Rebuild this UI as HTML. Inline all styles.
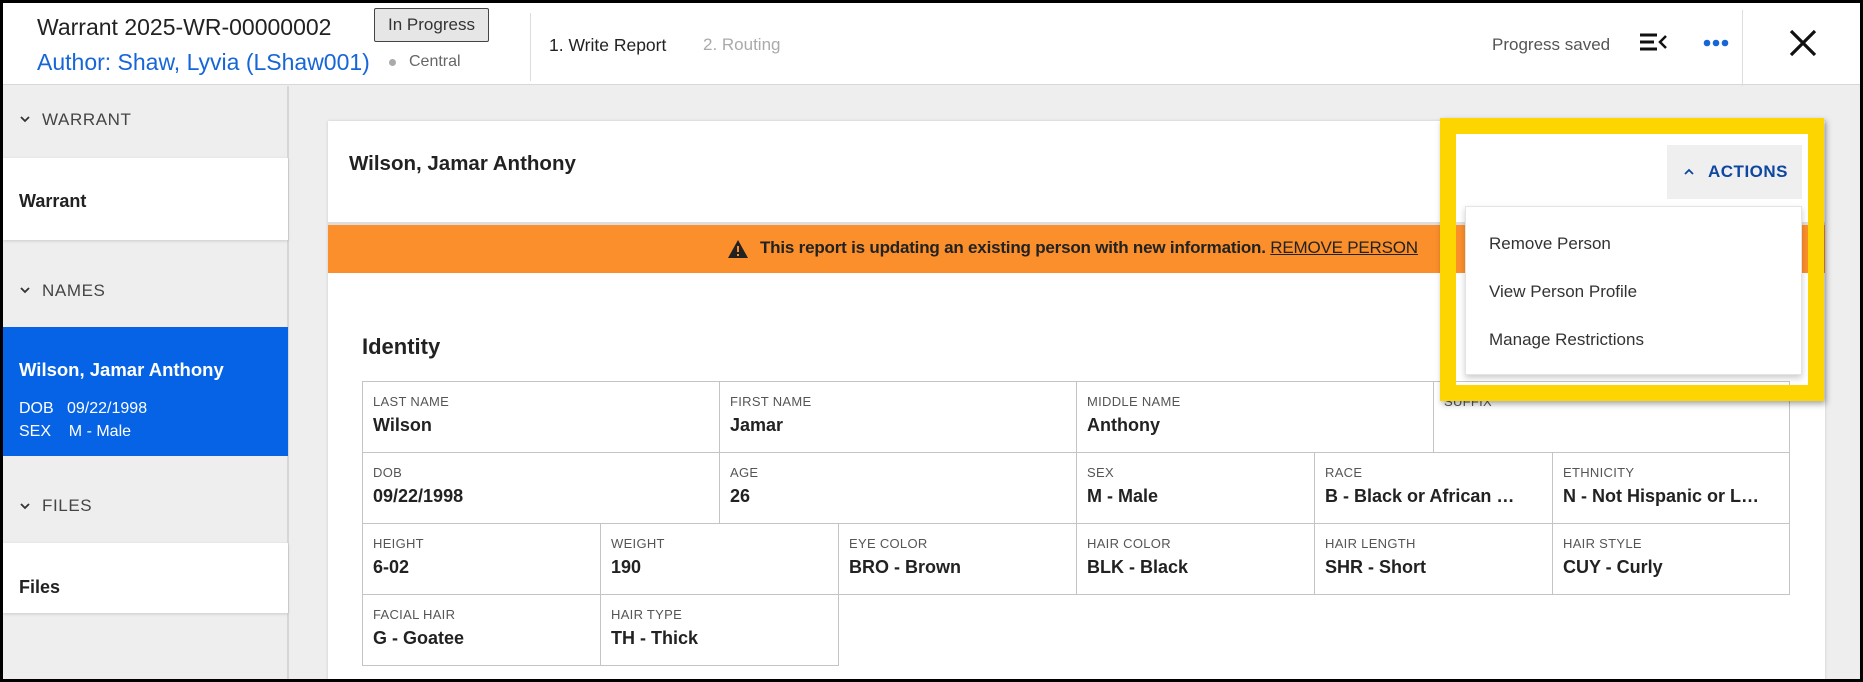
<!DOCTYPE html>
<html><head><meta charset="utf-8"><style>
*{box-sizing:border-box;margin:0;padding:0}
body{width:1863px;height:682px;overflow:hidden;font-family:"Liberation Sans",Arial,sans-serif;background:#000;position:relative;color:#212121}
.a{position:absolute;white-space:nowrap}
#frame{position:absolute;left:3px;top:3px;width:1857px;height:676px;background:#eeeeee;overflow:hidden}
.lbl{font-size:13px;color:#555;letter-spacing:.3px}
.val{font-size:18px;font-weight:bold;color:#222}
.cell{position:absolute;border:1px solid #c4c4c4;background:#fff;padding:0 10px}
.cell .lbl{position:absolute;left:10px;top:12px}
.cell .val{position:absolute;left:10px;top:33px}
</style></head><body>
<div id="frame">
<!-- header -->
<div class="a" style="left:0;top:0;width:1857px;height:82px;background:#fff;border-bottom:1px solid #d8d8d8"></div>
<div class="a" style="left:34px;top:11px;font-size:23px;color:#222">Warrant 2025-WR-00000002</div>
<div class="a" style="left:371px;top:5px;width:115px;height:34px;background:#e6e6e6;border:1px solid #444;border-radius:2px;font-size:17px;line-height:32px;text-align:center;color:#333">In Progress</div>
<div class="a" style="left:34px;top:46px;font-size:23px;color:#1666d8">Author: Shaw, Lyvia (LShaw001)</div>
<div class="a" style="left:386px;top:56px;width:7px;height:7px;border-radius:50%;background:#aaa"></div>
<div class="a" style="left:406px;top:50px;font-size:16px;color:#666">Central</div>
<div class="a" style="left:527px;top:10px;width:1px;height:68px;background:#ddd"></div>
<div class="a" style="left:546px;top:32px;font-size:17.5px;color:#222">1. Write Report</div>
<div class="a" style="left:700px;top:32px;font-size:17px;color:#aaa">2. Routing</div>
<div class="a" style="left:1489px;top:32px;font-size:17px;color:#555">Progress saved</div>
<svg class="a" style="left:1636px;top:29px" width="30" height="20" viewBox="0 0 30 20"><path d="M1 3h17M1 10h14M1 17h17" stroke="#111" stroke-width="3"/><path d="M27 4l-6 6 6 6" stroke="#111" stroke-width="2.5" fill="none"/></svg>
<svg class="a" style="left:1700px;top:36px" width="26" height="8"><circle cx="4" cy="4" r="3.3" fill="#1666d8"/><circle cx="13" cy="4" r="3.3" fill="#1666d8"/><circle cx="22" cy="4" r="3.3" fill="#1666d8"/></svg>
<div class="a" style="left:1739px;top:7px;width:1px;height:76px;background:#ddd"></div>
<svg class="a" style="left:1785px;top:25px" width="30" height="30"><path d="M3 3L27 27M27 3L3 27" stroke="#111" stroke-width="3.2"/></svg>

<!-- sidebar -->
<div class="a" style="left:0;top:83px;width:286px;height:600px;background:#eeeeee;border-right:2px solid #d6d6d6"></div>
<svg class="a" style="left:16px;top:112px" width="12" height="8"><path d="M2 2l4 4 4-4" stroke="#333" stroke-width="1.8" fill="none"/></svg>
<div class="a" style="left:39px;top:107px;font-size:17px;color:#444;letter-spacing:.6px">WARRANT</div>
<div class="a" style="left:0;top:155px;width:285px;height:82px;background:#fff;box-shadow:0 1px 3px rgba(0,0,0,.15)"></div>
<div class="a" style="left:16px;top:188px;font-size:18px;font-weight:bold;color:#222">Warrant</div>
<svg class="a" style="left:16px;top:283px" width="12" height="8"><path d="M2 2l4 4 4-4" stroke="#333" stroke-width="1.8" fill="none"/></svg>
<div class="a" style="left:39px;top:278px;font-size:17px;color:#444;letter-spacing:.6px">NAMES</div>
<div class="a" style="left:0;top:324px;width:285px;height:129px;background:#0763e5"></div>
<div class="a" style="left:16px;top:356px;font-size:18.5px;font-weight:bold;color:#fff">Wilson, Jamar Anthony</div>
<div class="a" style="left:16px;top:397px;font-size:16px;color:#fff">DOB&nbsp;&nbsp; 09/22/1998</div>
<div class="a" style="left:16px;top:420px;font-size:16px;color:#fff">SEX&nbsp;&nbsp;&nbsp; M - Male</div>
<svg class="a" style="left:16px;top:499px" width="12" height="8"><path d="M2 2l4 4 4-4" stroke="#333" stroke-width="1.8" fill="none"/></svg>
<div class="a" style="left:39px;top:493px;font-size:17px;color:#444;letter-spacing:.6px">FILES</div>
<div class="a" style="left:0;top:540px;width:285px;height:70px;background:#fff;box-shadow:0 1px 3px rgba(0,0,0,.15)"></div>
<div class="a" style="left:16px;top:574px;font-size:18px;font-weight:bold;color:#222">Files</div>

<!-- card -->
<div class="a" style="left:325px;top:118px;width:1497px;height:570px;background:#fff;box-shadow:0 0 3px rgba(0,0,0,.15)"></div>
<div class="a" style="left:346px;top:149px;font-size:20.5px;font-weight:bold;color:#222">Wilson, Jamar Anthony</div>
<div class="a" style="left:325px;top:219px;width:1497px;height:3px;background:#ddd"></div>
<div class="a" style="left:325px;top:222px;width:1497px;height:48px;background:#fb8f2b"></div>
<svg class="a" style="left:724px;top:236px" width="22" height="20"><path d="M11 1L21 19H1Z" fill="#222"/><path d="M11 7v6M11 15v2" stroke="#fb8f2b" stroke-width="2"/></svg>
<div class="a" style="left:757px;top:235px;font-size:17px;font-weight:bold;color:#222;letter-spacing:-.2px">This report is updating an existing person with new information. <span style="font-weight:normal;text-decoration:underline">REMOVE PERSON</span></div>
<div class="a" style="left:359px;top:331px;font-size:22px;font-weight:bold;color:#222">Identity</div>

<!-- table -->
<div class="cell" style="left:359px;top:378px;width:358px;height:72px"><div class="lbl">LAST NAME</div><div class="val">Wilson</div></div>
<div class="cell" style="left:716px;top:378px;width:358px;height:72px"><div class="lbl">FIRST NAME</div><div class="val">Jamar</div></div>
<div class="cell" style="left:1073px;top:378px;width:358px;height:72px"><div class="lbl">MIDDLE NAME</div><div class="val">Anthony</div></div>
<div class="cell" style="left:1430px;top:378px;width:357px;height:72px"><div class="lbl">SUFFIX</div></div>
<div class="cell" style="left:359px;top:449px;width:358px;height:72px"><div class="lbl">DOB</div><div class="val">09/22/1998</div></div>
<div class="cell" style="left:716px;top:449px;width:358px;height:72px"><div class="lbl">AGE</div><div class="val">26</div></div>
<div class="cell" style="left:1073px;top:449px;width:239px;height:72px"><div class="lbl">SEX</div><div class="val">M - Male</div></div>
<div class="cell" style="left:1311px;top:449px;width:239px;height:72px"><div class="lbl">RACE</div><div class="val">B - Black or African …</div></div>
<div class="cell" style="left:1549px;top:449px;width:238px;height:72px"><div class="lbl">ETHNICITY</div><div class="val">N - Not Hispanic or L…</div></div>
<div class="cell" style="left:359px;top:520px;width:239px;height:72px"><div class="lbl">HEIGHT</div><div class="val">6-02</div></div>
<div class="cell" style="left:597px;top:520px;width:239px;height:72px"><div class="lbl">WEIGHT</div><div class="val">190</div></div>
<div class="cell" style="left:835px;top:520px;width:239px;height:72px"><div class="lbl">EYE COLOR</div><div class="val">BRO - Brown</div></div>
<div class="cell" style="left:1073px;top:520px;width:239px;height:72px"><div class="lbl">HAIR COLOR</div><div class="val">BLK - Black</div></div>
<div class="cell" style="left:1311px;top:520px;width:239px;height:72px"><div class="lbl">HAIR LENGTH</div><div class="val">SHR - Short</div></div>
<div class="cell" style="left:1549px;top:520px;width:238px;height:72px"><div class="lbl">HAIR STYLE</div><div class="val">CUY - Curly</div></div>
<div class="cell" style="left:359px;top:591px;width:239px;height:72px"><div class="lbl">FACIAL HAIR</div><div class="val">G - Goatee</div></div>
<div class="cell" style="left:597px;top:591px;width:239px;height:72px"><div class="lbl">HAIR TYPE</div><div class="val">TH - Thick</div></div>

<!-- actions overlay -->
<div class="a" style="left:1438px;top:130px;width:362px;height:78px;background:#fff"></div>
<div class="a" style="left:1664px;top:142px;width:135px;height:54px;background:#efefef"></div>
<svg class="a" style="left:1680px;top:165px" width="12" height="8"><path d="M2 6l4-4 4 4" stroke="#0d47a1" stroke-width="1.8" fill="none"/></svg>
<div class="a" style="left:1705px;top:159px;font-size:17px;font-weight:bold;color:#0d47a1;letter-spacing:.5px">ACTIONS</div>
<div class="a" style="left:1462px;top:203px;width:337px;height:169px;background:#fff;border:1px solid #e4e4e4;box-shadow:0 3px 6px rgba(0,0,0,.2)"></div>
<div class="a" style="left:1486px;top:231px;font-size:17px;color:#333">Remove Person</div>
<div class="a" style="left:1486px;top:279px;font-size:17px;color:#333">View Person Profile</div>
<div class="a" style="left:1486px;top:327px;font-size:17px;color:#333">Manage Restrictions</div>
<div class="a" style="left:1437px;top:115px;width:384px;height:283px;border:16px solid #fdd500;box-shadow:2px 3px 6px rgba(0,0,0,.35)"></div>
</div>
</body></html>
